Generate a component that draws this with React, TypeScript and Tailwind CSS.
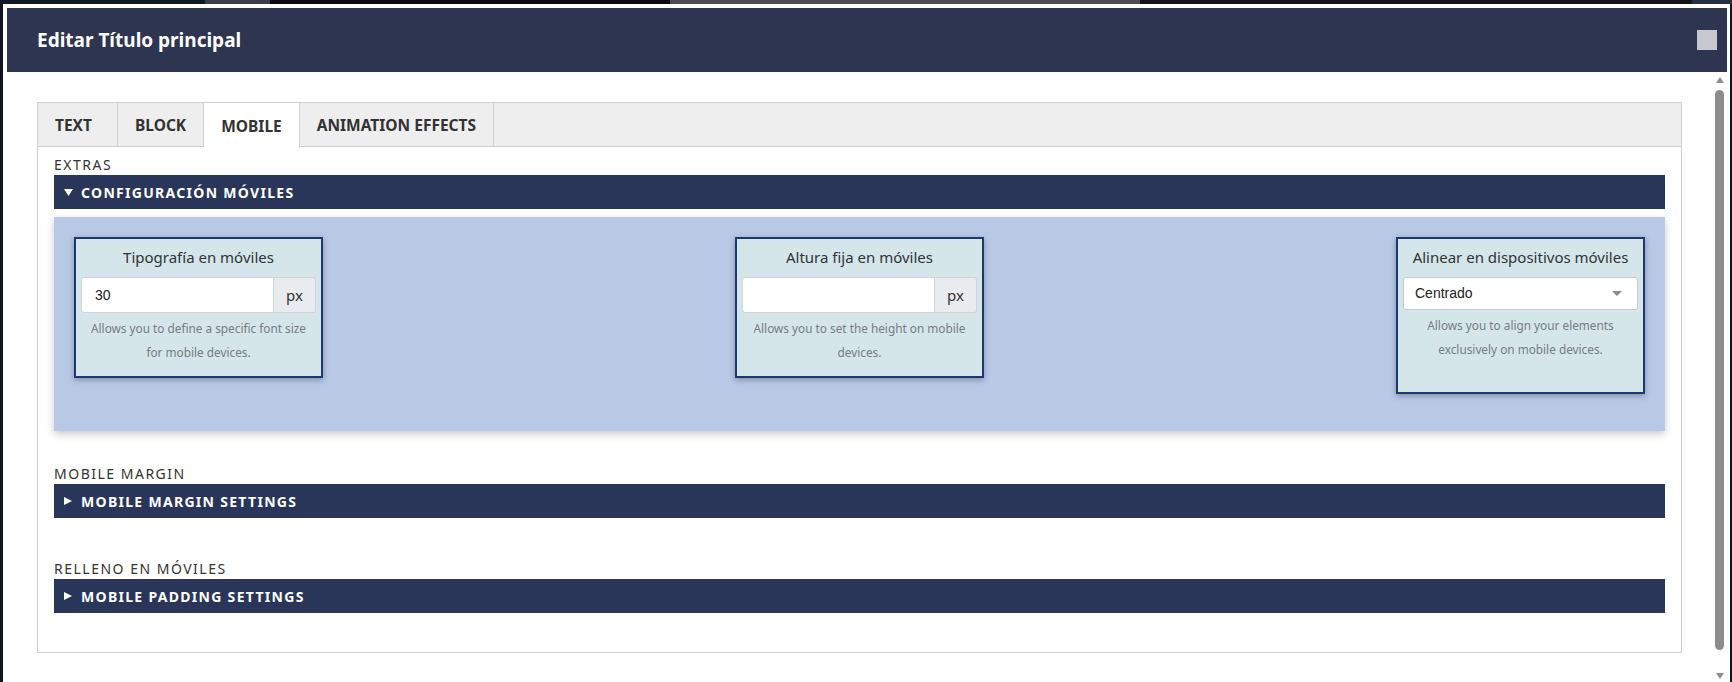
const tabs = ['TEXT', 'BLOCK', 'MOBILE', 'ANIMATION EFFECTS']

function SectionLabel({ children }: { children: string }) {
  return <div className="text-[14px] leading-[20px] tracking-[1.5px] text-[#333] uppercase">{children}</div>
}

function SectionBar({ label, open }: { label: string; open?: boolean }) {
  return (
    <div className="h-[34px] bg-[#2a3659] flex items-center pl-[10px] text-white">
      <span className="w-[17px] flex items-center">
        {open ? (
          <svg width="9" height="7" viewBox="0 0 9 7">
            <path d="M0 0h9L4.5 7z" fill="#fff" />
          </svg>
        ) : (
          <svg width="8" height="8" viewBox="0 0 8 8">
            <path d="M0 0l8 4-8 4z" fill="#fff" />
          </svg>
        )}
      </span>
      <span className="text-[14px] font-bold tracking-[1.3px] uppercase">{label}</span>
    </div>
  )
}

function Card({ title, help, children, tall }: { title: string; help: string; children: React.ReactNode; tall?: boolean }) {
  return (
    <div
      className={`w-[249px] border-2 border-[#1b3873] bg-[#d4e6ea] shadow-[0_2px_6px_rgba(0,0,0,0.3)] px-[5px] pt-[6px] ${tall ? 'pb-[31px]' : 'pb-[12px]'}`}
    >
      <div className="text-center text-[15px] leading-[24px] text-[#333]">{title}</div>
      <div className="mt-[8px]">{children}</div>
      <p className="mt-[3px] text-center text-[11.8px] leading-[24px] text-[#767c83] px-[3px]">{help}</p>
    </div>
  )
}

function PxInput({ value }: { value: string }) {
  return (
    <div className="flex h-[36px]">
      <div className="flex-1 bg-white border border-[#ced4da] rounded-l-[3px] flex items-center pl-[13px] text-[14px] text-[#222] font-['Liberation_Sans',Arial,sans-serif]">
        {value}
      </div>
      <div className="w-[42px] bg-[#e9ecef] border border-l-0 border-[#ced4da] rounded-r-[3px] flex items-center justify-center text-[15px] text-[#333]">
        px
      </div>
    </div>
  )
}

export default function App() {
  return (
    <div className="h-[682px] w-full overflow-hidden bg-[#10141f] flex flex-col font-['Noto_Sans','Roboto',sans-serif]">
      {/* page behind the modal */}
      <div className="h-[4px] flex shrink-0">
        <div className="w-[205px] bg-[#121826]" />
        <div className="w-[65px] bg-[#3b3f48]" />
        <div className="w-[400px] bg-[#0b0b0b]" />
        <div className="w-[470px] bg-[#4d4d4d]" />
        <div className="flex-1 bg-[#141414]" />
        <div className="w-[40px] bg-[#243045]" />
      </div>

      <div className="flex flex-1 min-h-0">
        <div className="w-[3px] bg-[#10141f]" />
        <div className="flex-1 bg-white pt-[4px] pl-[4px] pr-[3px] flex flex-col min-h-0">
          {/* header */}
          <div className="h-[64px] shrink-0 bg-[#2e3550] flex items-center justify-between pl-[30px] pr-[10px]">
            <h1 className="text-white text-[19px] font-bold">Editar Título principal</h1>
            <button className="w-[20px] h-[20px] bg-[#c8c9d0]" aria-label="Cerrar" />
          </div>

          <div className="flex flex-1 min-h-0">
            <div className="flex-1 px-[30px] pt-[30px]">
              <div className="border border-[#cfcfcf]">
                {/* tabs */}
                <div className="flex h-[44px] bg-[#eeeeee] border-b border-[#cfcfcf]">
                  {tabs.map((t) => (
                    <div
                      key={t}
                      className={`min-w-[80px] px-[17px] pt-[2px] flex items-center text-[15.5px] font-bold text-[#333] border-r border-[#cfcfcf] ${
                        t === 'MOBILE' ? 'bg-white -mb-px h-[45px]' : ''
                      }`}
                    >
                      {t}
                    </div>
                  ))}
                </div>

                <div className="pl-[16px] pr-[16px] pt-[8px] pb-[39px]">
                  <SectionLabel>Extras</SectionLabel>
                  <SectionBar label="Configuración móviles" open />

                  <div className="mt-[8px] bg-[#b8c9e6] shadow-[0_3px_8px_rgba(0,0,0,0.22)] px-[20px] pt-[20px] pb-[37px] flex justify-between items-start">
                    <Card title="Tipografía en móviles" help="Allows you to define a specific font size for mobile devices.">
                      <PxInput value="30" />
                    </Card>
                    <Card title="Altura fija en móviles" help="Allows you to set the height on mobile devices.">
                      <PxInput value="" />
                    </Card>
                    <Card title="Alinear en dispositivos móviles" help="Allows you to align your elements exclusively on mobile devices." tall>
                      <div className="h-[33px] bg-white border border-[#c8c8c8] rounded-[3px] flex items-center justify-between pl-[11px] pr-[15px] text-[14px] text-[#222] font-['Liberation_Sans',Arial,sans-serif]">
                        <span>Centrado</span>
                        <span className="w-0 h-0 border-l-[5px] border-r-[5px] border-t-[5px] border-l-transparent border-r-transparent border-t-[#8a8a8a]" />
                      </div>
                    </Card>
                  </div>

                  <div className="mt-[33px]">
                    <SectionLabel>Mobile margin</SectionLabel>
                    <SectionBar label="Mobile margin settings" />
                  </div>

                  <div className="mt-[41px]">
                    <SectionLabel>Relleno en móviles</SectionLabel>
                    <SectionBar label="Mobile padding settings" />
                  </div>
                </div>
              </div>
            </div>

            {/* scrollbar */}
            <div className="w-[15px] shrink-0 flex flex-col items-center pt-[5px]">
              <span className="w-0 h-0 border-l-[4px] border-r-[4px] border-b-[6px] border-l-transparent border-r-transparent border-b-[#8f8f8f]" />
              <div className="mt-[7px] w-[9px] h-[560px] rounded-full bg-[#8c8c8c]" />
              <span className="mt-[23px] w-0 h-0 border-l-[4px] border-r-[4px] border-t-[6px] border-l-transparent border-r-transparent border-t-[#8f8f8f]" />
            </div>
          </div>
        </div>
        <div className="w-[2px] bg-[#10141f]" />
      </div>
    </div>
  )
}
